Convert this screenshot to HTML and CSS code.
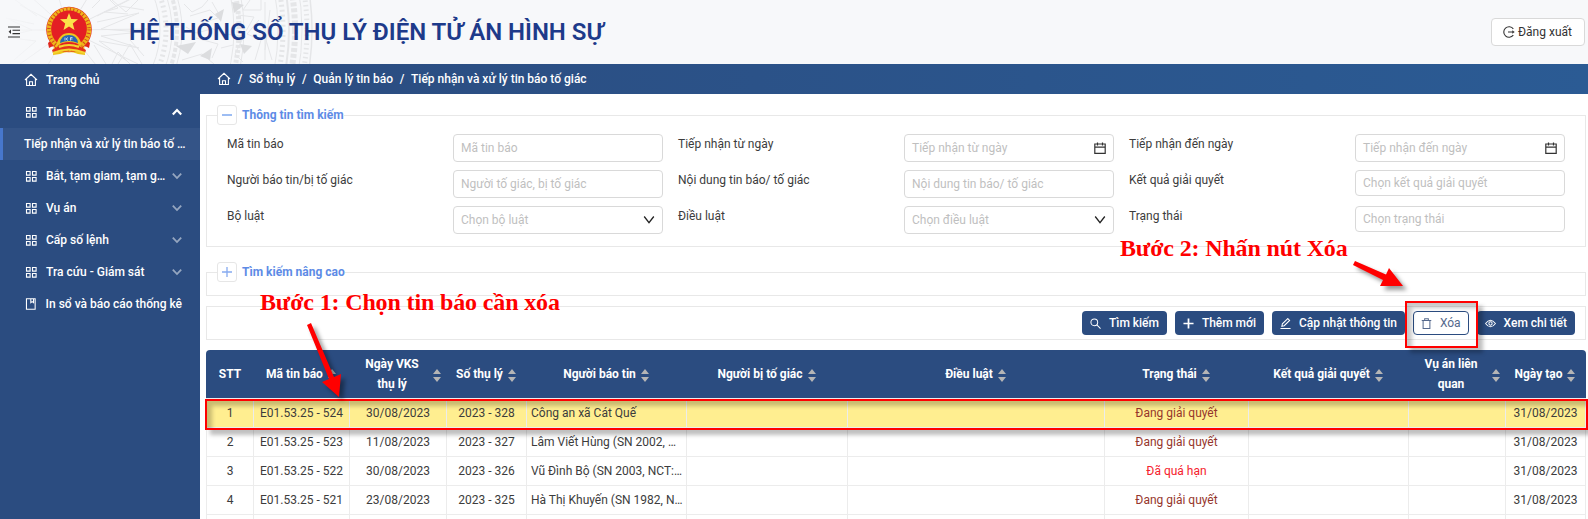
FILE: index.html
```html
<!DOCTYPE html>
<html lang="vi">
<head>
<meta charset="utf-8">
<title>Hệ thống sổ thụ lý điện tử án hình sự</title>
<link rel="stylesheet" href="styles.css">
</head>
<body>
<svg class="defs" width="0" height="0">
  <symbol id="home" viewBox="0 0 14 14"><path d="M1 7 7 1.300 13 7M2.600 6v6.500h8.800V6M5.500 12.500V8.700h3v3.800" fill="none" stroke="currentColor" stroke-width="1.100"/></symbol>
  <symbol id="grid" viewBox="0 0 12 12"><path d="M1.500 1.500h3.600v3.600H1.500zM7.500 1.500h3.600v3.600H7.500zM1.500 7.500h3.600v3.600H1.500zM7.500 7.500h3.600v3.600H7.500z" fill="none" stroke="currentColor" stroke-width="1.100"/></symbol>
  <symbol id="book" viewBox="0 0 12 12"><path d="M1.500.6h9v10.800h-9zM6 .6v4l1.400-1 1.400 1v-4" fill="none" stroke="currentColor" stroke-width="1.100"/></symbol>
  <symbol id="down" viewBox="0 0 10 10"><path d="M.8 2.600 5 7l4.200-4.400" fill="none" stroke="currentColor"/></symbol>
  <symbol id="select" viewBox="0 0 12 12"><path d="M1.200 2.500 6 8.700l4.800-6.200" fill="none" stroke="currentColor" stroke-width="1.300"/></symbol>
  <symbol id="cal" viewBox="0 0 12 12"><path d="M.8 2h10.400v9.300H.8zM.8 5.200h10.400M3.500.4v3M8.500.4v3" fill="none" stroke="currentColor" stroke-width="1.200"/></symbol>
  <symbol id="sort" viewBox="0 0 8 13"><path d="M4 0 8 5H0zM4 13 0 8h8z" fill="currentColor"/></symbol>
</svg>

<header class="header">
  <svg class="drum" width="330" height="64" viewBox="0 0 330 64">
    <defs>
      <linearGradient id="fade"><stop offset="0" stop-color="#fff" stop-opacity="0"/><stop offset=".25" stop-color="#fff"/></linearGradient>
      <mask id="fadeMask"><rect width="330" height="64" fill="url(#fade)"/></mask>
    </defs>
    <g mask="url(#fadeMask)" fill="none" stroke="#e5e6e8">
      <circle cx="68" cy="30" r="92"/>
      <circle cx="68" cy="30" r="98" stroke-width="5" stroke-dasharray="2 3"/>
      <circle cx="68" cy="30" r="104"/>
      <circle cx="68" cy="30" r="109" stroke-width="4" stroke-dasharray="4 2"/>
      <circle cx="68" cy="30" r="114"/>
      <circle cx="68" cy="30" r="166"/>
      <circle cx="68" cy="30" r="171" stroke-width="5" stroke-dasharray="3 2"/>
      <circle cx="68" cy="30" r="176"/>
      <circle cx="68" cy="30" r="210"/>
      <circle cx="68" cy="30" r="215" stroke-width="5" stroke-dasharray="2 3"/>
      <circle cx="68" cy="30" r="221" stroke-width="2"/>
      <circle cx="68" cy="30" r="227" stroke-width="6" stroke-dasharray="4 2"/>
      <circle cx="68" cy="30" r="234"/>
      <circle cx="68" cy="30" r="239" stroke-width="5" stroke-dasharray="1.500 3"/>
      <circle cx="68" cy="30" r="244" stroke-width="1.500"/>
      <path d="M68 30 30-4M68 30 20 5M68 30 8 30M68 30 20 64M68 30 45 70M68 30 58-5M68 30 90-6M68 30 128 0M68 30 150 29M68 30 138 64M68 30 100 70M97 16l40-20M92 8l12-12M97 22l42-9-38 16 40 3-40 4 38 12-40-7 28 20M94 45l12 19M37 16 10-4M34 24 6 18l26 12-28 7 32 4-22 19"/>
      <path d="M108-2l10 10-14 4 24 2M112 64l6-12 12 12M118 64l12-20 12 20M112 0l14 12 12-12M130 40l14 16M120 6l24 4"/>
      <path d="M184 4l8 8 10-5 6-7M190 16l20-6 8 8-16 5 15 8M186 27l10 6 16-4M212 2l8 14M196 38l22 6-6 14M182 60l20-6 12 10M224 34l20 2-9 18 8 8M221 48l12-3M238 15l16 2-8 14M250 0l-7 10h18V0M259 20l-12 14 14 6-6 20M265 2v58M270 10l-5 40M272 60l-6-20"/>
      <path d="M176 46l20-4-8 12zM215 14l9-5-3 13zM200 56l12-8-2 12zM240 44l12 2-8 8zM232 2l12 3-10 8z" fill="#dcdddf" stroke="none"/>
    </g>
  </svg>
  <svg class="fold" width="12" height="12" viewBox="0 0 12 12"><path d="M0 1h12M4.500 4.300H12M4.500 7.600H12M0 11h12" stroke="#333" stroke-width="1.100"/><path d="M3 3.500v4.600L.6 5.800z" fill="#333"/></svg>
  <svg class="emblem" width="48" height="50" viewBox="0 0 48 50">
    <path d="M9 37h30l1 12-7-1q-9-4-18 0l-7 1z" fill="#ecc21a"/>
    <path d="M3 37q3-4 9-1v5q-4-2-8 1zM45 37q-3-4-9-1v5q4-2 8 1zM10 41q14-8 28 0v3q-14-7-28 0z" fill="#e0261c"/>
    <circle cx="24" cy="23.500" r="22.800" fill="#e3261b"/>
    <circle cx="24" cy="23.500" r="20" fill="none" stroke="#efb51a" stroke-width="4.500"/>
    <circle cx="24" cy="23.500" r="20" fill="none" stroke="#d3481a" stroke-width="3.500" stroke-dasharray="1 2.500"/>
    <circle cx="24" cy="22" r="17.500" fill="#e41f24"/>
    <path d="m24 7 2.300 6 6.700.3-5.200 4.200 1.700 6.500L24 20.500 18.500 24l1.700-6.500-5.200-4.200 6.700-.3z" fill="#fbe24a"/>
    <path d="M11 40q3-13 13-13t13 13q-13-8-26 0z" fill="#f0c51d"/>
    <path d="M15 37q1-8 9-8t9 8q-9-4-18 0z" fill="#2768b5"/>
    <path d="m20 31.500v3m3-3-2 1.500 2 1.500M25.500 34.500v-3h2m-2 1.500h2" stroke="#dce9f5" stroke-width=".8" fill="none"/>
    <path d="M7 44l7-4q10-5 20 0l7 4-1 3q-16-6-32 0z" fill="#e3321c"/>
    <path d="M8 47q16-7 32 0M14 41q10-4 20 0" fill="none" stroke="#f4d430" stroke-width="2.200"/>
  </svg>
  <h1 class="title">HỆ THỐNG SỔ THỤ LÝ ĐIỆN TỬ ÁN HÌNH SỰ</h1>
  <button class="logout"><svg width="12" height="12" viewBox="0 0 12 12"><path d="M10.300 2.800a5.300 5.300 0 1 0 0 6.400M5 6h5" fill="none" stroke="#333" stroke-width="1.100"/><path d="M9.300 4.300 11.700 6 9.300 7.700z" fill="#333"/></svg>Đăng xuất</button>
</header>

<div class="body">
  <nav class="sidebar">
    <a class="item"><svg class="ico ico-home"><use href="#home"/></svg><span>Trang chủ</span></a>
    <a class="item"><svg class="ico"><use href="#grid"/></svg><span>Tin báo</span><svg class="chev open"><use href="#down"/></svg></a>
    <a class="item sub"><span>Tiếp nhận và xử lý tin báo tố …</span></a>
    <a class="item"><svg class="ico"><use href="#grid"/></svg><span>Bắt, tạm giam, tạm g…</span><svg class="chev"><use href="#down"/></svg></a>
    <a class="item"><svg class="ico"><use href="#grid"/></svg><span>Vụ án</span><svg class="chev"><use href="#down"/></svg></a>
    <a class="item"><svg class="ico"><use href="#grid"/></svg><span>Cấp số lệnh</span><svg class="chev"><use href="#down"/></svg></a>
    <a class="item"><svg class="ico"><use href="#grid"/></svg><span>Tra cứu - Giám sát</span><svg class="chev"><use href="#down"/></svg></a>
    <a class="item"><svg class="ico"><use href="#book"/></svg><span>In sổ và báo cáo thống kê</span></a>
  </nav>

  <main class="main">
    <div class="crumbs"><svg class="ico-home"><use href="#home"/></svg><i>/</i><span>Sổ thụ lý</span><i>/</i><span>Quản lý tin báo</span><i>/</i><span>Tiếp nhận và xử lý tin báo tố giác</span></div>
    <div class="content">
      <section class="box search">
        <div class="legend"><b class="toggle"><svg width="10" height="10"><path d="M0 5h10" stroke="#9dbdf3" stroke-width="2"/></svg></b><span>Thông tin tìm kiếm</span></div>
        <div class="form">
          <label>Mã tin báo</label><div class="input">Mã tin báo</div>
          <label>Tiếp nhận từ ngày</label><div class="input">Tiếp nhận từ ngày<svg class="cal"><use href="#cal"/></svg></div>
          <label>Tiếp nhận đến ngày</label><div class="input">Tiếp nhận đến ngày<svg class="cal"><use href="#cal"/></svg></div>
          <label>Người báo tin/bị tố giác</label><div class="input">Người tố giác, bị tố giác</div>
          <label>Nội dung tin báo/ tố giác</label><div class="input">Nội dung tin báo/ tố giác</div>
          <label>Kết quả giải quyết</label><div class="input short">Chọn kết quả giải quyết</div>
          <label>Bộ luật</label><div class="input">Chọn bộ luật<svg class="arrow"><use href="#select"/></svg></div>
          <label>Điều luật</label><div class="input">Chọn điều luật<svg class="arrow"><use href="#select"/></svg></div>
          <label>Trạng thái</label><div class="input short">Chọn trạng thái</div>
        </div>
      </section>

      <section class="box advanced">
        <div class="legend"><b class="toggle"><svg width="10" height="10"><path d="M0 5h10M5 0v10" stroke="#86aaf0" stroke-width="1.300"/></svg></b><span>Tìm kiếm nâng cao</span></div>
      </section>

      <section class="box toolbar">
        <button class="btn"><svg viewBox="0 0 12 12"><circle cx="4.700" cy="4.700" r="3.700"/><path d="m7.500 7.500 4 4"/></svg>Tìm kiếm</button>
        <button class="btn"><svg viewBox="0 0 12 12"><path d="M.5 6h11M6 .5v11" stroke-width="1.900"/></svg>Thêm mới</button>
        <button class="btn"><svg viewBox="0 0 12 12"><path d="M.5 11.400h11M2 9l.6-2.600L8.500.6l2 2-5.900 5.800z"/></svg>Cập nhật thông tin</button>
        <button class="btn light"><svg viewBox="0 0 12 12"><path d="M.8 2.600h10.400M2.300 2.600v8.800h7.400V2.600M4 2.600V.7h4v1.900"/></svg>Xóa</button>
        <button class="btn"><svg viewBox="0 0 12 12"><path d="M.6 6Q6-1.200 11.400 6 6 13.200.6 6z"/><circle cx="6" cy="6" r="1.800"/></svg>Xem chi tiết</button>
      </section>

      <table class="grid">
        <colgroup><col class="c1"><col class="c2"><col class="c3"><col class="c4"><col class="c5"><col class="c6"><col class="c7"><col class="c8"><col class="c9"><col class="c10"><col class="c11"></colgroup>
        <thead><tr>
          <th>STT</th>
          <th><div class="h"><span>Mã tin báo</span><svg class="s"><use href="#sort"/></svg></div></th>
          <th><div class="h wide"><span>Ngày VKS<br>thụ lý</span><svg class="s"><use href="#sort"/></svg></div></th>
          <th><div class="h"><span>Số thụ lý</span><svg class="s"><use href="#sort"/></svg></div></th>
          <th><div class="h"><span>Người báo tin</span><svg class="s"><use href="#sort"/></svg></div></th>
          <th><div class="h"><span>Người bị tố giác</span><svg class="s"><use href="#sort"/></svg></div></th>
          <th><div class="h"><span>Điều luật</span><svg class="s"><use href="#sort"/></svg></div></th>
          <th><div class="h"><span>Trạng thái</span><svg class="s"><use href="#sort"/></svg></div></th>
          <th><div class="h"><span>Kết quả giải quyết</span><svg class="s"><use href="#sort"/></svg></div></th>
          <th><div class="h wide"><span>Vụ án liên<br>quan</span><svg class="s"><use href="#sort"/></svg></div></th>
          <th><div class="h"><span>Ngày tạo</span><svg class="s"><use href="#sort"/></svg></div></th>
        </tr></thead>
        <tbody>
          <tr class="selected"><td>1</td><td>E01.53.25 - 524</td><td>30/08/2023</td><td>2023 - 328</td><td class="left">Công an xã Cát Quế</td><td></td><td></td><td class="open">Đang giải quyết</td><td></td><td></td><td>31/08/2023</td></tr>
          <tr><td>2</td><td>E01.53.25 - 523</td><td>11/08/2023</td><td>2023 - 327</td><td class="left">Lâm Viết Hùng (SN 2002, …</td><td></td><td></td><td class="open">Đang giải quyết</td><td></td><td></td><td>31/08/2023</td></tr>
          <tr><td>3</td><td>E01.53.25 - 522</td><td>30/08/2023</td><td>2023 - 326</td><td class="left">Vũ Đình Bộ (SN 2003, NCT:…</td><td></td><td></td><td class="late">Đã quá hạn</td><td></td><td></td><td>31/08/2023</td></tr>
          <tr><td>4</td><td>E01.53.25 - 521</td><td>23/08/2023</td><td>2023 - 325</td><td class="left">Hà Thị Khuyến (SN 1982, N…</td><td></td><td></td><td class="open">Đang giải quyết</td><td></td><td></td><td>31/08/2023</td></tr>
          <tr><td></td><td></td><td></td><td></td><td></td><td></td><td></td><td></td><td></td><td></td><td></td></tr>
        </tbody>
      </table>
    </div>
  </main>
</div>

<div class="mark mark-row"></div>
<div class="mark mark-button"></div>
<p class="note note-1">Bước 1: Chọn tin báo cần xóa</p>
<p class="note note-2">Bước 2: Nhấn nút Xóa</p>
<svg class="arrows" width="1588" height="519" viewBox="0 0 1588 519"><path d="M307 325 329 379 322 382 339 397 341 374 334 377 311 323zM1353 265 1383 280 1380 286 1403 286 1389 268 1386 274.500 1355 261z" fill="#f00"/></svg>
</body>
</html>
```
FILE: styles.css
```css
* { box-sizing: border-box; }
body { margin: 0; width: 1588px; height: 519px; overflow: hidden; position: relative; background: #fff; color: #3c3c3c; font: 12px/20px Roboto, sans-serif; }
button { font: inherit; }
.defs { position: absolute; }

.header { position: relative; height: 64px; background: #f7f8fa; display: flex; align-items: center; padding: 0 3px 0 8px; }
.drum { position: absolute; left: 0; top: 0; }
.fold, .emblem, .title, .logout { position: relative; }
.fold { margin-right: 25px; }
.emblem { margin-top: -2px; }
.title { margin: 0 auto 0 36px; font-size: 24px; line-height: 32px; font-weight: 600; letter-spacing: -.02px; color: #1d3a8a; white-space: nowrap; }
.logout { width: 94px; height: 28px; display: flex; align-items: center; justify-content: center; gap: 3px; padding: 0 1px 0 0; background: #fff; border: 1px solid #d9d9d9; border-radius: 4px; color: #333; }

.body { display: flex; height: 455px; }
.sidebar { width: 200px; flex: none; background: #2b4c80; color: #fff; font-weight: 500; }
.item { height: 32px; display: flex; align-items: center; padding: 0 18px 0 25px; white-space: nowrap; }
.item span { flex: 1; }
.ico { width: 12px; height: 12px; margin: 0 9px 0 0; }
.ico-home { width: 14px; height: 14px; }
.item .ico-home { margin: 0 8px 0 -1px; }
.chev { width: 10px; height: 10px; opacity: .5; stroke-width: 1.800; }
.chev.open { transform: rotate(180deg); opacity: 1; stroke-width: 2.200; }
.sub { background: #345487; border-left: 3px solid #4777cc; padding-left: 21px; padding-right: 0; }

.main { flex: 1; min-width: 0; }
.crumbs { height: 30px; display: flex; align-items: center; padding-left: 17px; background: linear-gradient(90deg, #2b4c80, #2b5b94); color: #fff; font-weight: 500; }
.crumbs i { font-style: normal; width: 18px; text-align: center; }
.content { padding: 21px 2px 0 6px; }
.box { border: 1px solid #e8e8e8; }
.legend { height: 20px; margin: -11px 0 0 10px; display: flex; align-items: center; font-weight: 700; color: #5d8be6; }
.legend span { background: #fff; padding-left: 5px; }
.toggle { width: 20px; height: 20px; display: flex; align-items: center; justify-content: center; background: #fff; border: 1px solid #e6e6e6; border-radius: 3px; }
.search { height: 132px; }
.form { display: grid; grid-template-columns: repeat(3, 226px 225px); grid-auto-rows: 36px; padding: 9px 0 0 20px; }
.input { width: 210px; height: 28px; border: 1px solid #d9d9d9; border-radius: 4px; padding: 0 7px; display: flex; align-items: center; justify-content: space-between; color: #bfbfbf; white-space: nowrap; }
.input.short { height: 26px; }
.cal { width: 12px; height: 12px; color: #333; }
.arrow { width: 12px; height: 12px; color: #222; }
.advanced { height: 24px; margin-top: 25px; }
.toolbar { height: 34px; margin-top: 10px; display: flex; justify-content: flex-end; align-items: center; gap: 8px; padding-right: 10px; }
.btn { height: 24px; display: flex; align-items: center; gap: 8px; padding: 0 8px; border: 0; border-radius: 4px; background: #2b4c80; color: #fff; font-weight: 500; letter-spacing: -.03px; white-space: nowrap; }
.btn svg { width: 11px; height: 11px; fill: none; stroke: currentColor; stroke-width: 1.100; }
.btn.light { background: #fff; color: #55698d; border: 1px solid #2b4c80; font-weight: 400; padding: 0 7px; }

.grid { width: 1380px; margin-top: 10px; table-layout: fixed; border-collapse: separate; border-spacing: 0; }
.c1 { width: 48px; } .c2 { width: 96px; } .c3 { width: 97px; } .c4 { width: 80px; } .c5 { width: 160px; } .c6 { width: 161px; }
.c7 { width: 257px; } .c8 { width: 144px; } .c9 { width: 160px; } .c10 { width: 97px; } .c11 { width: 80px; }
.grid th { height: 49px; padding: 0 2px 0 0; background: #2b4c80; border-bottom: 1px solid #ececec; color: #fff; font-weight: 700; white-space: nowrap; }
.grid th:first-child { border-top-left-radius: 4px; padding: 0; }
.grid th:last-child { border-top-right-radius: 4px; }
.h { display: flex; align-items: center; justify-content: center; gap: 5px; }
.wide span { flex: 1; padding-left: 6px; }
.wide { padding-right: 4px; }
.s { width: 8px; height: 13px; color: #b5b5b5; margin-top: 2px; }
.grid td { height: 29px; padding: 0 4px; text-align: center; border-right: 1px solid #ececec; border-bottom: 1px solid #ececec; white-space: nowrap; overflow: hidden; }
.grid td:first-child { border-left: 1px solid #ececec; }
.grid .left { text-align: left; padding-right: 0; }
.grid .selected td { background: #ffee90; }
.grid .open { color: #96362c; }
.grid .late { color: #f5222d; }

.mark { position: absolute; border: 2px solid #f00; box-shadow: 5px 5px 4px rgba(0,0,0,.25), inset 5px 5px 4px rgba(0,0,0,.22); }
.mark-row { left: 205px; top: 399px; width: 1383px; height: 31px; }
.mark-button { left: 1405px; top: 301px; width: 73px; height: 47px; }
.note { position: absolute; margin: 0; color: #f00; font: 700 24px/28px "Liberation Serif", serif; letter-spacing: -.14px; white-space: nowrap; }
.note-1 { left: 260px; top: 288px; }
.note-2 { left: 1120px; top: 234px; }
.arrows { position: absolute; left: 0; top: 0; filter: drop-shadow(4px 4px 2px rgba(0,0,0,.4)); }
```
